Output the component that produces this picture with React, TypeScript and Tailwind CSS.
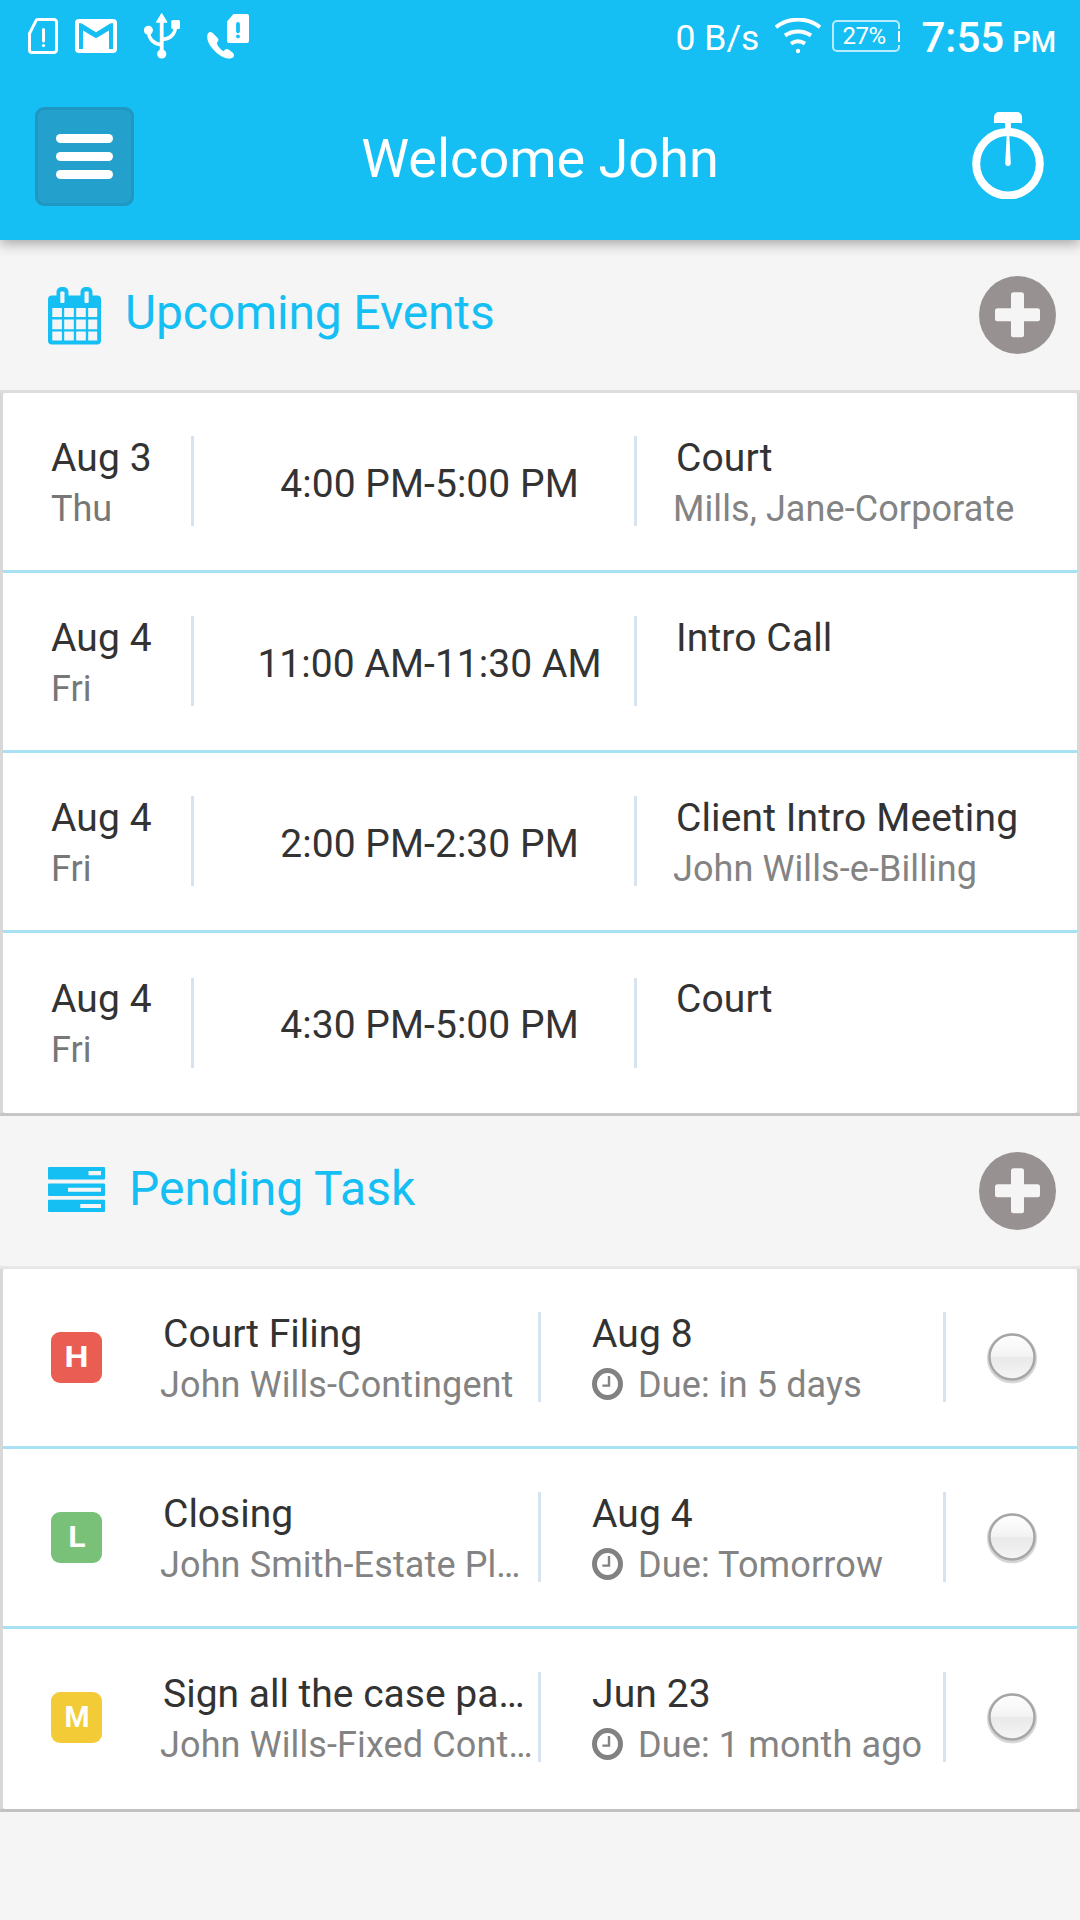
import clsx from 'clsx';

const events = [
  { id: 1, date: 'Aug 3', day: 'Thu', time: '4:00 PM-5:00 PM', title: 'Court', matter: 'Mills, Jane-Corporate' },
  { id: 2, date: 'Aug 4', day: 'Fri', time: '11:00 AM-11:30 AM', title: 'Intro Call', matter: '' },
  { id: 3, date: 'Aug 4', day: 'Fri', time: '2:00 PM-2:30 PM', title: 'Client Intro Meeting', matter: 'John Wills-e-Billing' },
  { id: 4, date: 'Aug 4', day: 'Fri', time: '4:30 PM-5:00 PM', title: 'Court', matter: '' },
];

const tasks = [
  { id: 1, priority: 'H', title: 'Court Filing', matter: 'John Wills-Contingent', date: 'Aug 8', due: 'in 5 days' },
  { id: 2, priority: 'L', title: 'Closing', matter: 'John Smith-Estate Pl…', date: 'Aug 4', due: 'Tomorrow' },
  { id: 3, priority: 'M', title: 'Sign all the case pa…', matter: 'John Wills-Fixed Cont…', date: 'Jun 23', due: '1 month ago' },
];

function StatusBar() {
  return (
    <div className="flex h-[72px] items-start text-white">
      {/* Notification icons */}
      <svg className="ml-[28px] mt-[18px] h-[36px] w-[30px] shrink-0" viewBox="0 0 30 36" fill="none">
        <path
          d="M9.5 1.5H26a2.5 2.5 0 0 1 2.5 2.5v28a2.5 2.5 0 0 1-2.5 2.5H4A2.5 2.5 0 0 1 1.5 32V15.5L8 2.6Q8.5 1.5 9.5 1.5Z"
          stroke="white"
          strokeWidth="3"
        />
        <path d="M15.5 11.5v11.500" stroke="white" strokeWidth="3" strokeLinecap="round" />
        <circle cx="15.5" cy="27.5" r="1.6" fill="white" />
      </svg>
      <svg className="ml-[17px] mt-[19px] h-[34px] w-[42px] shrink-0" viewBox="0 0 42 34">
        <path
          fill="white"
          fillRule="evenodd"
          d="M4 0h34a4 4 0 0 1 4 4v26a4 4 0 0 1-4 4H4a4 4 0 0 1-4-4V4a4 4 0 0 1 4-4ZM4 4.2V30h4V11.5l13 7.7 13-7.7V30h4V4.2h-2.4L21 13.2 6.4 4.2Z"
        />
      </svg>
      <svg className="ml-[27px] mt-[13px] h-[46px] w-[36px] shrink-0" viewBox="0 0 36 46" fill="none">
        <path d="M17.700 7v34" stroke="white" strokeWidth="3.800" />
        <path d="M17.700 0.500 L23 9.200H12.400Z" fill="white" stroke="white" strokeWidth="1" strokeLinejoin="round" />
        <path d="M4.500 18c0 8.500 6 13.300 13 13.600M31.500 13c0 8.500-6 13.300-13.800 13.400" stroke="white" strokeWidth="3.600" />
        <circle cx="4.4" cy="17.3" r="4.500" fill="white" />
        <circle cx="17.7" cy="41" r="4.600" fill="white" />
        <rect x="27.300" y="7" width="8.700" height="9" rx="1.5" fill="white" />
      </svg>
      <svg className="ml-[27px] mt-[14px] h-[45px] w-[42px] shrink-0" viewBox="0 0 42 45">
        <path
          fill="white"
          fillRule="evenodd"
          d="M26.5 0H40a2 2 0 0 1 2 2v25a2 2 0 0 1-2 2H22a2 2 0 0 1-2-2V7.500ZM31 8a1.900 1.900 0 0 0-1.900 1.900v7.400a1.900 1.900 0 0 0 3.800 0v-7.400A1.900 1.900 0 0 0 31 8Zm0 12.500a1.900 1.900 0 1 0 0 3.800 1.900 1.900 0 0 0 0-3.800Z"
        />
        <path
          fill="white"
          d="M5.200 18.500c-1.500-1-3.500-.6-4.300 1C-.6 22.700.2 28 4.600 33.400 9 39.200 15 43.500 21 44.500c2.200.3 4.700-.2 5.600-1.700.8-1.300.4-3-.8-4l-4.200-3.200c-1.200-.9-2.700-.9-3.700.1l-1 1.200c-1 .3-2.200-.7-4-2.700-1.800-2-3-4-3-5.300l1-1.300c.7-1 .7-2.200 0-3.400Z"
        />
      </svg>

      <div className="flex-1" />

      {/* Network speed, wifi, battery and clock */}
      <span className="mt-[17px] text-[35.5px] leading-[42px]">0 B/s</span>
      <svg className="ml-[16px] mt-[18px] h-[36px] w-[46px] shrink-0" viewBox="0 0 46 36" fill="none" stroke="white">
        <path d="M1 9.200C14-1 32-1 45 9.200" strokeWidth="4" />
        <path d="M10 17.500C18 12 28 12 36 17.500" strokeWidth="4" />
        <path d="M16 25.600C20.500 22.600 25.500 22.600 30 25.600" strokeWidth="3.800" />
        <circle cx="23" cy="33" r="2.200" fill="white" stroke="none" />
      </svg>
      <div className="relative ml-[11px] mt-[20px] h-[32px] w-[68px] rounded-[5px] border-2 border-white/70">
        <span className="block pl-[8px] text-[24px] leading-[29px] tracking-[-0.5px]">27%</span>
        <div className="absolute -right-[2px] top-[7px] h-[16px] w-[2px] bg-[#15bff4]" />
        <div className="absolute -right-[2px] top-[9px] h-[11px] w-[2px] bg-white" />
      </div>
      <span className="ml-[21px] mt-[13px] text-[42px] font-medium leading-[50px]">7:55</span>
      <span className="ml-[8px] mr-[24px] mt-[24px] text-[29px] font-medium leading-[36px]">PM</span>
    </div>
  );
}

function Header() {
  return (
    <header className="relative z-10 h-[240px] bg-[#15bff4] shadow-[0_4px_12px_rgba(0,0,0,0.32)]">
      <StatusBar />
      <div className="grid h-[168px] grid-cols-[1fr_auto_1fr] items-start">
        <button className="ml-[35px] mt-[35px] flex h-[99px] w-[99px] flex-col items-center justify-center gap-[9px] rounded-[9px] border-[3px] border-[#1f97c2] bg-[#23a0cb]">
          <span className="h-[9px] w-[57px] rounded-full bg-white" />
          <span className="h-[9px] w-[57px] rounded-full bg-white" />
          <span className="h-[9px] w-[57px] rounded-full bg-white" />
        </button>
        <h1 className="mt-[55px] text-[54px] leading-[64px] text-white">Welcome John</h1>
        <svg className="ml-auto mr-[36px] mt-[40px] h-[87px] w-[72px]" viewBox="0 0 72 87">
          <circle cx="36" cy="51.700" r="31.800" fill="none" stroke="white" strokeWidth="8" />
          <path d="M22 11V5a5 5 0 0 1 5-5h18a5 5 0 0 1 5 5v6Z" fill="white" />
          <rect x="33.100" y="10" width="5.800" height="9" fill="white" />
          <path d="M34.800 22h2.400l1.600 29a2.800 3 0 0 1-5.600 0Z" fill="white" />
        </svg>
      </div>
    </header>
  );
}

function CalendarIcon() {
  return (
    <svg className="mt-[47px] h-[58px] w-[53px]" viewBox="0 0 53 58" fill="none">
      <rect y="8.500" width="53" height="49" rx="4" fill="#15bff4" />
      <rect x="8.500" width="12" height="20" rx="5" fill="#15bff4" />
      <rect x="32.500" width="12" height="20" rx="5" fill="#15bff4" />
      <rect x="12.300" y="4.500" width="4.200" height="11.500" rx="1" fill="#f5f5f5" />
      <rect x="36.500" y="4.500" width="4.200" height="11.500" rx="1" fill="#f5f5f5" />
      <path
        fill="#f5f5f5"
        d="M4.300 21h9.600v9H4.300ZM16.200 21h9.600v9h-9.600ZM28.200 21h9.600v9h-9.600ZM40.200 21h9v9h-9ZM4.300 32.400h9.600v9.800H4.300ZM16.200 32.400h9.600v9.800h-9.600ZM28.200 32.400h9.600v9.800h-9.600ZM40.200 32.400h9v9.800h-9ZM4.300 44.500h9.600v9H4.300ZM16.200 44.500h9.600v9h-9.600ZM28.200 44.500h9.600v9h-9.600ZM40.200 44.500h9v9h-9Z"
      />
    </svg>
  );
}

function TasksIcon() {
  return (
    <svg className="mt-[51px] h-[45px] w-[57px]" viewBox="0 0 57 45">
      <rect width="57" height="12.400" rx="1" fill="#15bff4" />
      <rect y="16.500" width="57" height="12.400" rx="1" fill="#15bff4" />
      <rect y="32.700" width="57" height="12.300" rx="1" fill="#15bff4" />
      <path d="M40.500 4.100H53v4.200H40.500ZM20 20.700h33v4.100H20ZM32.300 37H53v4H32.300Z" fill="#f5f5f5" />
    </svg>
  );
}

function AddButton() {
  return (
    <button className="ml-auto mr-[24px] mt-[36px]">
      <svg className="h-[78px] w-[77px]" viewBox="0 0 77 78">
        <ellipse cx="38.500" cy="39" rx="38.500" ry="39" fill="#979291" />
        <rect x="32" y="16.300" width="13" height="45" rx="2.500" fill="#f5f5f5" />
        <rect x="16" y="32.300" width="45" height="13" rx="2.500" fill="#f5f5f5" />
      </svg>
    </button>
  );
}

function Divider({ last = false }: { last?: boolean }) {
  return <div className={clsx('h-[90px] w-[3px] shrink-0 bg-[#d7e3ee]', last ? 'mt-[44px]' : 'mt-[43px]')} />;
}

function Radio() {
  return (
    <svg className="h-[56px] w-[56px]" viewBox="0 0 56 56">
      <defs>
        <linearGradient id="radio" x1="0" y1="0" x2="0" y2="1">
          <stop offset="0" stopColor="#ffffff" />
          <stop offset="0.480" stopColor="#f3f3f3" />
          <stop offset="0.520" stopColor="#e9e9e9" />
          <stop offset="1" stopColor="#f5f5f5" />
        </linearGradient>
      </defs>
      <circle cx="28" cy="29.300" r="23.300" fill="none" stroke="#000" strokeOpacity="0.160" strokeWidth="3.500" />
      <circle cx="28" cy="28" r="22.500" fill="url(#radio)" stroke="#a6a6a6" strokeWidth="2.400" />
    </svg>
  );
}

function Clock() {
  return (
    <svg className="mt-[9px] h-[32px] w-[31px] shrink-0" viewBox="0 0 31 32" fill="none" stroke="#838181">
      <ellipse cx="15.500" cy="16" rx="13" ry="13.500" strokeWidth="5" />
      <path d="M17 8v9.600h-6.600" strokeWidth="2.400" />
    </svg>
  );
}

export default function App() {
  return (
    <div className="min-h-[1920px] w-[1080px] overflow-hidden bg-[#f5f5f5] font-['Roboto',sans-serif] text-[#333333]">
      <Header />

      {/* Upcoming events */}
      <div className="flex h-[150px] items-start pl-[48px]">
        <CalendarIcon />
        <h2 className="ml-[24px] mt-[45px] text-[48px] leading-[56px] tracking-[-0.15px] text-[#15bff4]">Upcoming Events</h2>
        <AddButton />
      </div>
      <div className="h-[726px] border-y-[3px] border-t-[#dedede] border-b-[#c6c6c6] bg-[#d8d8d8] px-[3px]">
        <div className="h-[720px] rounded-[2px] bg-white">
          {events.map((event, i) => (
            <div
              key={event.id}
              className={clsx('flex h-[180px] items-start', i < events.length - 1 ? 'border-b-[3px] border-[#a8e1f4]' : 'pt-px')}
            >
              <div className="w-[188px] shrink-0 pl-[48px] pt-[40px]">
                <p className="text-[39px] leading-[50px] tracking-[0.12px]">{event.date}</p>
                <p className="text-[36px] leading-[52px] text-[#777777]">{event.day}</p>
              </div>
              <Divider last={i === events.length - 1} />
              <p className="w-[440px] shrink-0 pl-[31px] pt-[66px] text-center text-[39px] leading-[50px] tracking-[0.05px]">
                {event.time}
              </p>
              <Divider last={i === events.length - 1} />
              <div className="pl-[36px] pt-[40px]">
                <p className="pl-[3px] text-[39px] leading-[50px] tracking-[0.12px]">{event.title}</p>
                <p className="text-[36px] leading-[52px] tracking-[0.09px] text-[#838383]">{event.matter}</p>
              </div>
            </div>
          ))}
        </div>
      </div>

      {/* Pending tasks */}
      <div className="flex h-[150px] items-start pl-[48px]">
        <TasksIcon />
        <h2 className="ml-[24px] mt-[45px] text-[48px] leading-[56px] text-[#15bff4]">Pending Task</h2>
        <AddButton />
      </div>
      <div className="h-[546px] border-y-[3px] border-t-[#e7e7e7] border-b-[#c2c2c2] bg-[#d8d8d8] px-[3px]">
        <div className="h-[540px] rounded-[2px] bg-white">
          {tasks.map((task, i) => (
            <div
              key={task.id}
              className={clsx('flex h-[180px] items-start', i < tasks.length - 1 && 'border-b-[3px] border-[#a8e1f4]')}
            >
              <div
                className={clsx(
                  'ml-[48px] mt-[63px] flex h-[51px] w-[51px] shrink-0 items-center justify-center rounded-[9px]',
                  task.priority === 'H' && 'bg-[#e95d52]',
                  task.priority === 'L' && 'bg-[#79c078]',
                  task.priority === 'M' && 'bg-[#f2cb37]',
                )}
              >
                <span
                  className={clsx(
                    'text-[29.5px] font-bold leading-[51px] text-white',
                    task.priority === 'H' && 'scale-x-[1.15]',
                    task.priority === 'L' && 'scale-x-[1.08]',
                    task.priority === 'M' && 'scale-x-[0.97]',
                  )}
                >
                  {task.priority}
                </span>
              </div>
              <div className="w-[436px] shrink-0 whitespace-nowrap pl-[58px] pt-[40px]">
                <p className="pl-[3px] text-[39px] leading-[50px]">{task.title}</p>
                <p className="text-[36px] leading-[52px] tracking-[0.12px] text-[#838383]">{task.matter}</p>
              </div>
              <Divider />
              <div className="w-[402px] shrink-0 pl-[51px] pt-[40px]">
                <p className="text-[39px] leading-[50px] tracking-[0.12px]">{task.date}</p>
                <div className="flex items-start text-[36px] leading-[52px] tracking-[0.12px] text-[#838383]">
                  <Clock />
                  <span className="ml-[15px]">Due: {task.due}</span>
                </div>
              </div>
              <Divider />
              <div className="ml-[38px] mt-[60px]">
                <Radio />
              </div>
            </div>
          ))}
        </div>
      </div>
    </div>
  );
}
